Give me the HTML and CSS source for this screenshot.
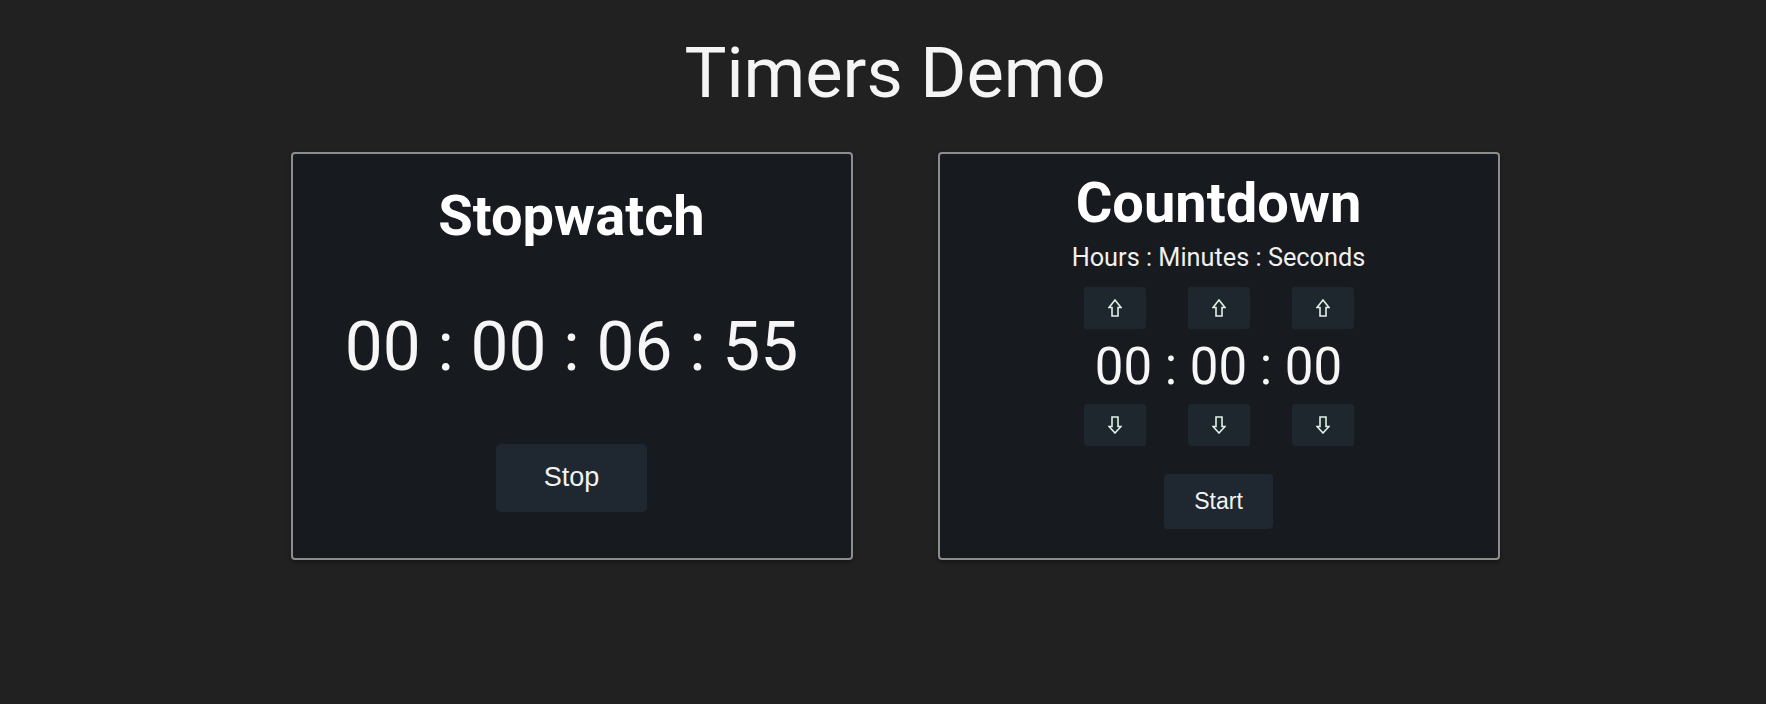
FILE: index.html
```html
<!DOCTYPE html>
<html lang="en">
<head>
<meta charset="utf-8">
<title>Timers Demo</title>
<link rel="stylesheet" href="styles.css">
</head>
<body>
<div class="page">
  <h1 class="page-title">Timers Demo</h1>
  <div class="timers">
    <section class="card card--stopwatch">
      <h2 class="card-title">Stopwatch</h2>
      <div class="stopwatch-time">00 : 00 : 06 : 55</div>
      <button class="btn btn--large">Stop</button>
    </section>
    <section class="card card--countdown">
      <h2 class="card-title">Countdown</h2>
      <div class="countdown-units">Hours : Minutes : Seconds</div>
      <div class="arrow-row">
        <button class="arrow-btn" aria-label="hours up"><svg class="arrow" viewBox="0 0 14 18" width="14" height="18"><polygon points="7,1 13,8.5 10,8.5 10,17 4,17 4,8.5 1,8.5"/></svg></button>
        <button class="arrow-btn" aria-label="minutes up"><svg class="arrow" viewBox="0 0 14 18" width="14" height="18"><polygon points="7,1 13,8.5 10,8.5 10,17 4,17 4,8.5 1,8.5"/></svg></button>
        <button class="arrow-btn" aria-label="seconds up"><svg class="arrow" viewBox="0 0 14 18" width="14" height="18"><polygon points="7,1 13,8.5 10,8.5 10,17 4,17 4,8.5 1,8.5"/></svg></button>
      </div>
      <div class="countdown-time">00 : 00 : 00</div>
      <div class="arrow-row arrow-row--down">
        <button class="arrow-btn" aria-label="hours down"><svg class="arrow" viewBox="0 0 14 18" width="14" height="18"><polygon points="7,17 13,10.5 10,10.5 10,1 4,1 4,10.5 1,10.5"/></svg></button>
        <button class="arrow-btn" aria-label="minutes down"><svg class="arrow" viewBox="0 0 14 18" width="14" height="18"><polygon points="7,17 13,10.5 10,10.5 10,1 4,1 4,10.5 1,10.5"/></svg></button>
        <button class="arrow-btn" aria-label="seconds down"><svg class="arrow" viewBox="0 0 14 18" width="14" height="18"><polygon points="7,17 13,10.5 10,10.5 10,1 4,1 4,10.5 1,10.5"/></svg></button>
      </div>
      <button class="btn btn--small">Start</button>
    </section>
  </div>
</div>
</body>
</html>
```
FILE: styles.css
```css
* {
  box-sizing: border-box;
}

html, body {
  margin: 0;
  padding: 0;
  background: #212121;
  color: #f4f4f4;
  font-family: Roboto, "Noto Sans", Arial, sans-serif;
}

.page {
  width: 1766px;
  height: 704px;
  padding-left: 24px;
  padding-top: 32px;
}

.page-title {
  margin: 0;
  text-align: center;
  font-size: 70.4px;
  font-weight: 400;
  line-height: 82px;
  color: #f5f5f5;
}

.timers {
  display: flex;
  justify-content: center;
  gap: 85px;
  margin-top: 38px;
}

.card {
  width: 562px;
  height: 408px;
  border: 2px solid #8d8d8d;
  border-radius: 4px;
  background: #171a1e;
  box-shadow: 0 2px 4px rgba(0, 0, 0, 0.35);
  display: flex;
  flex-direction: column;
  align-items: center;
}

.card--stopwatch {
  padding-top: 29px;
}

.card--countdown {
  padding-top: 16px;
}

.card-title {
  margin: 0;
  font-size: 56px;
  font-weight: 700;
  line-height: 66px;
  color: #ffffff;
}

.stopwatch-time {
  margin-top: 58px;
  font-size: 67.6px;
  line-height: 80px;
  color: #f6f6f6;
}

.btn {
  border: none;
  background: #1f2830;
  color: #f2f2f2;
  font-family: "Liberation Sans", Arial, sans-serif;
  border-radius: 5px;
  cursor: pointer;
}

.btn--large {
  margin-top: 57px;
  font-size: 27px;
  line-height: 31px;
  padding: 18px 48px 19px;
}

.btn--small {
  margin-top: 28px;
  font-size: 23px;
  line-height: 27px;
  padding: 14px 30px;
  border-radius: 4px;
}

.countdown-units {
  margin-top: 7px;
  font-size: 25.3px;
  line-height: 29px;
  color: #f0f0f0;
}

.arrow-row {
  display: flex;
  gap: 42px;
  margin-top: 15px;
}

.arrow-row--down {
  margin-top: 7px;
}

.arrow-btn {
  width: 62px;
  height: 42px;
  padding: 0;
  border: none;
  border-radius: 3px;
  background: #1e272e;
  display: flex;
  align-items: center;
  justify-content: center;
  cursor: pointer;
}

.arrow {
  display: block;
}

.arrow polygon {
  fill: none;
  stroke: #dff2e6;
  stroke-width: 1.6;
  stroke-linejoin: miter;
}

.countdown-time {
  margin-top: 8px;
  font-size: 51px;
  line-height: 60px;
  color: #f6f6f6;
}
```
